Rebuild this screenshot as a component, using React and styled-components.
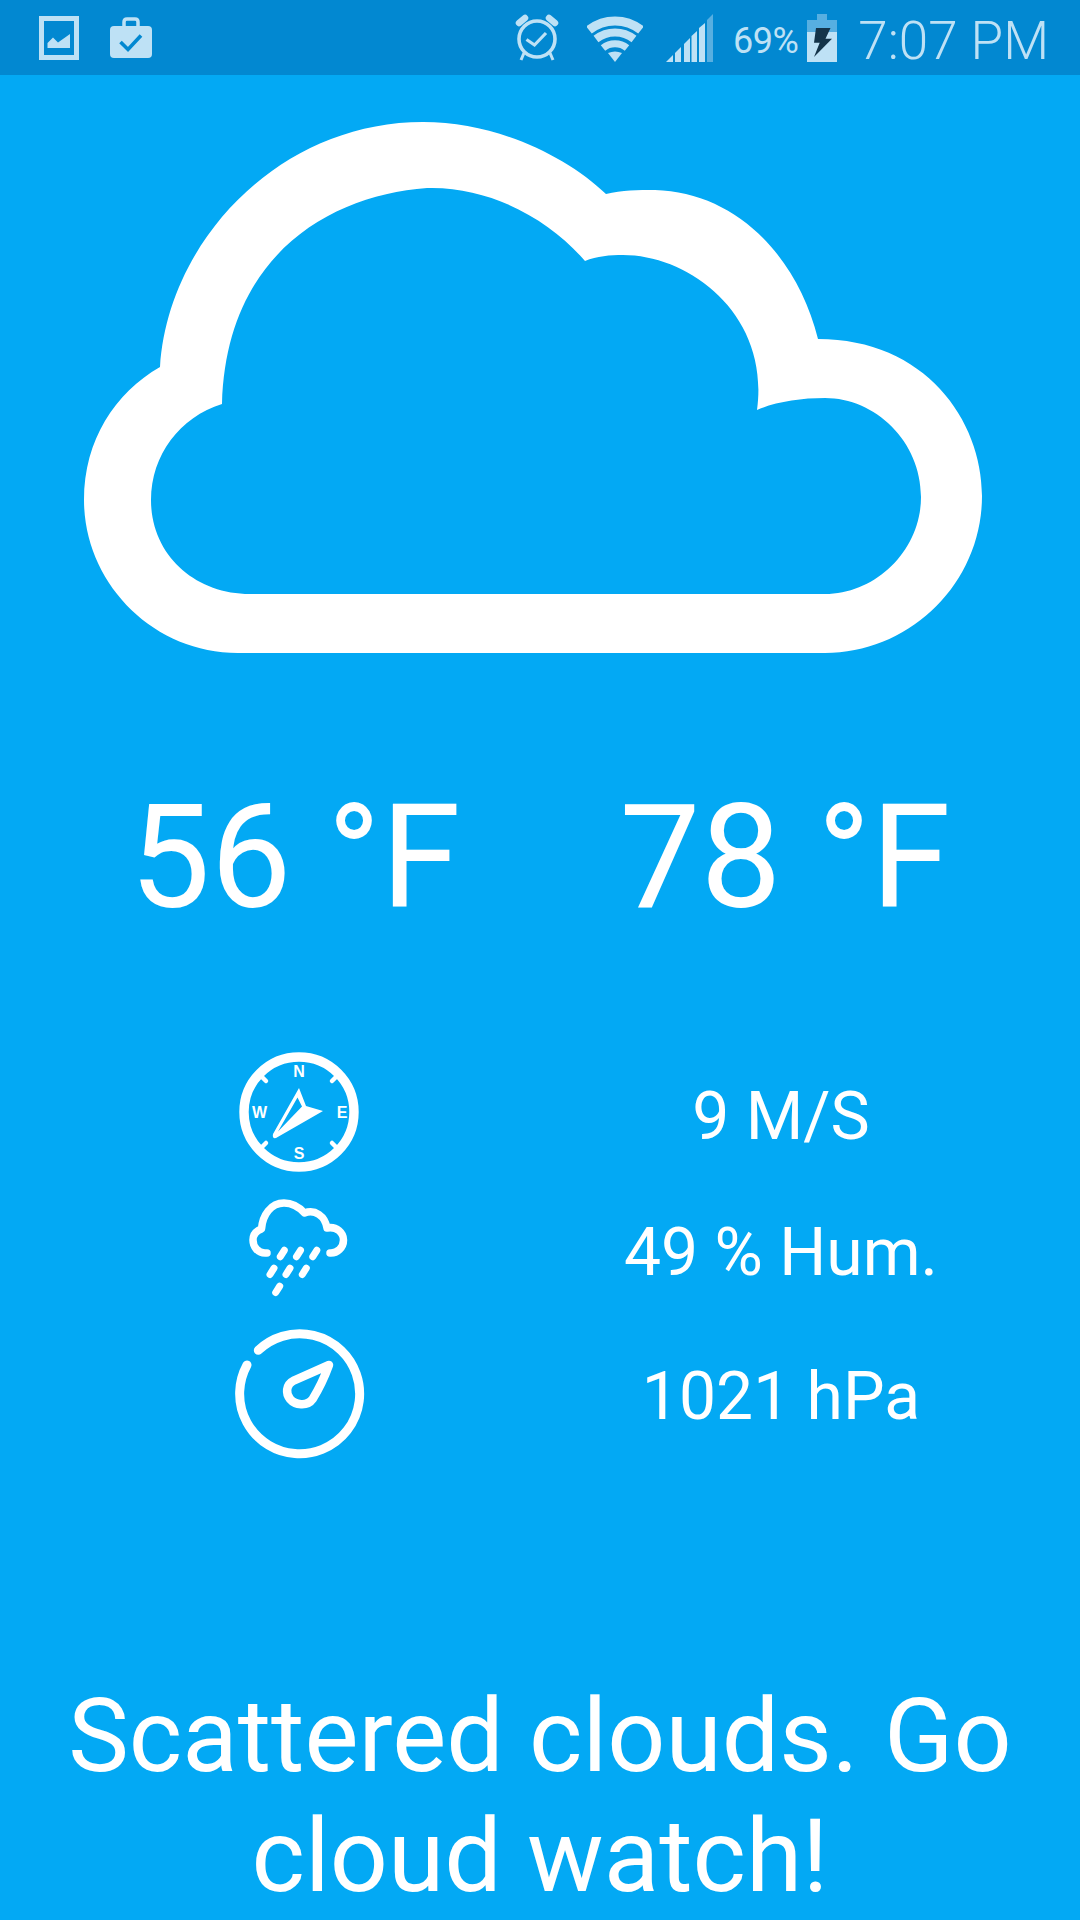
import React from 'react';
import styled, { createGlobalStyle } from 'styled-components';

const GlobalStyle = createGlobalStyle`
  html, body {
    margin: 0;
    padding: 0;
    background: #03a9f4;
  }
`;

const Page = styled.div`
  display: flex;
  flex-direction: column;
  width: 1080px;
  height: 1920px;
  overflow: hidden;
  background: #03a9f4;
  color: #fff;
  font-family: Roboto, sans-serif;
`;

const StatusBar = styled.div`
  display: flex;
  align-items: center;
  justify-content: space-between;
  height: 75px;
  flex-shrink: 0;
  padding: 0 31px 0 39px;
  box-sizing: border-box;
  background: #0288d1;
  color: #bee1f5;
`;

const StatusGroup = styled.div`
  display: flex;
  align-items: center;
`;

const StatusIcon = styled.svg`
  display: block;
  flex-shrink: 0;
  margin-right: ${(p) => p.$gap || 0}px;
`;

const BatteryText = styled.span`
  font-size: 36px;
  line-height: 40px;
  margin-right: 9px;
  padding-top: 6px;
  letter-spacing: -0.5px;
`;

const Clock = styled.span`
  font-size: 53px;
  line-height: 60px;
  margin-left: 21px;
  padding-top: 6px;
  font-weight: 300;
`;

const Hero = styled.div`
  padding: 47px 0 0 83px;
`;

const CloudIcon = styled.svg`
  display: block;
`;

const TempRow = styled.div`
  display: grid;
  grid-template-columns: 490px 490px;
  padding: 0 50px;
  margin-top: 119px;
`;

const Temp = styled.div`
  font-size: 144px;
  line-height: 170px;
  text-align: center;
`;

const Details = styled.div`
  display: flex;
  flex-direction: column;
  padding: 0 50px;
  margin-top: 100px;
`;

const DetailRow = styled.div`
  display: grid;
  grid-template-columns: 498px 466px;
  align-items: center;
  height: ${(p) => p.$height}px;
`;

const DetailIcon = styled.svg`
  display: block;
  justify-self: center;
`;

const DetailText = styled.div`
  font-size: 66px;
  line-height: 78px;
  padding-top: 10px;
  text-align: center;
`;

const Description = styled.div`
  margin-top: 207px;
  padding: 0 40px;
  font-size: 102px;
  line-height: 120px;
  text-align: center;
`;

const ImageGlyph = () => (
  <StatusIcon width="40" height="44" viewBox="39 16 40 44" $gap={31}>
    <path
      fillRule="evenodd"
      fill="currentColor"
      d="M39 16H79V60H39ZM44 21V55H74V21Z"
    />
    <path fill="currentColor" d="M47.5 48V43L53 37.5L58 42.5L70 34V48Z" />
  </StatusIcon>
);

const CaseGlyph = () => (
  <StatusIcon width="42" height="41" viewBox="110 16 42 41">
    <path
      fill="none"
      stroke="currentColor"
      strokeWidth="3.5"
      d="M124 26V21Q124 18 127 18H135Q138 18 138 21V26"
    />
    <rect x="110" y="25" width="42" height="32" rx="4" fill="currentColor" />
    <path
      fill="none"
      stroke="#0288d1"
      strokeWidth="3.6"
      d="M120.5 41L128 48.5L141 34.5"
    />
  </StatusIcon>
);

const AlarmGlyph = () => (
  <StatusIcon width="44" height="48" viewBox="514 14 44 48" $gap={28}>
    <circle cx="536" cy="39" r="18" fill="none" stroke="currentColor" strokeWidth="3.6" />
    <path
      fill="none"
      stroke="currentColor"
      strokeWidth="6.5"
      strokeLinecap="round"
      d="M518 23L524 18M554 23L548 18"
    />
    <path
      fill="none"
      stroke="currentColor"
      strokeWidth="3"
      d="M523 53L520 60M549 53L552 60"
    />
    <path
      fill="none"
      stroke="currentColor"
      strokeWidth="3.2"
      d="M525.5 39.5L533.5 45L545 33"
    />
  </StatusIcon>
);

const WifiGlyph = () => (
  <StatusIcon width="56" height="48" viewBox="586 13 56 48" $gap={23}>
    <g fill="none" stroke="currentColor">
      <path strokeWidth="9" d="M588 29A42 42 0 0 1 640 29" />
      <path strokeWidth="8" d="M595 38A31 31 0 0 1 633 38" />
      <path strokeWidth="7" d="M602 47A19 19 0 0 1 626 47" />
    </g>
    <path fill="currentColor" d="M607 52Q614 49 621 52L614 61Z" />
  </StatusIcon>
);

const SignalGlyph = () => (
  <StatusIcon width="48" height="48" viewBox="665 13 48 48" $gap={19}>
    <g fill="currentColor">
      <path d="M665 61L672 54V61Z" />
      <path d="M674 61V52L680 46V61Z" />
      <path d="M683 61V43L689 37V61Z" />
      <path d="M690.5 61V35L696 30V61Z" />
      <path d="M698 61V27L704 22V61Z" />
      <path d="M706 61V19L712 13V61Z" opacity="0.45" />
    </g>
  </StatusIcon>
);

const BatteryGlyph = () => (
  <StatusIcon width="30" height="48" viewBox="806 12 30 48">
    <path d="M816 12H826V18H836V30H806V18H816Z" fill="currentColor" opacity="0.45" />
    <rect x="806" y="30" width="30" height="30" fill="currentColor" />
    <path
      fill="#14344a"
      d="M815 26H829.5L824.5 36.7H831L813 55L818.7 40.7H813Z"
    />
  </StatusIcon>
);

const Cloud = () => (
  <CloudIcon width="900" height="532" viewBox="83 122 900 532">
    <path
      fill="#fff"
      fillRule="evenodd"
      d="M160 367C168 240 280 122 423 122C495 122 565 155 606 194C622 190 638 190 655 190C735 192 797 255 818 339C925 339 982 420 982 496C982 583 910 653 825 653H238C152 653 84 582 84 500C84 440 115 393 160 367Z
         M222 404C226 255 330 195 427 188C490 186 550 220 585 261C597 256 610 255 623 255C690 255 770 315 757 410C775 402 800 398 825 398C875 398 921 441 921 497C921 550 876 594 825 594H250C195 594 151 555 151 500C151 455 180 417 222 404Z"
    />
  </CloudIcon>
);

const CompassLetter = styled.text`
  font-family: "Liberation Sans", sans-serif;
  font-size: 16px;
  font-weight: 700;
  fill: #fff;
  text-anchor: middle;
  dominant-baseline: central;
`;

const Compass = () => (
  <DetailIcon width="120" height="120" viewBox="0 0 120 120">
    <circle cx="60" cy="60" r="55" fill="none" stroke="#fff" strokeWidth="9.4" />
    <path
      fill="none"
      stroke="#fff"
      strokeWidth="4.5"
      strokeLinecap="round"
      d="M23 25L27 29M97 25L93 29M23 95L27 91M97 95L93 91"
    />
    <path
      fill="#fff"
      fillRule="evenodd"
      d="M60 36L67 54L84 59L37 86Q33 87 34 82ZM58.5 45.5L39 79.5L63 54.5Z"
    />
    <CompassLetter x="60" y="19">N</CompassLetter>
    <CompassLetter x="20.5" y="60">W</CompassLetter>
    <CompassLetter x="103" y="60">E</CompassLetter>
    <CompassLetter x="60" y="101">S</CompassLetter>
  </DetailIcon>
);

const Rain = () => (
  <DetailIcon width="100" height="100" viewBox="30 16 100 100">
    <path
      fill="none"
      stroke="#fff"
      strokeWidth="7.5"
      strokeLinecap="round"
      strokeLinejoin="round"
      d="M48 71H46C39 71 34 65 34 58C34 53 37 49 42.5 47C43.5 33 52 21 65 21C73 21 80 25 85.5 31C96 27 106 34 108 46C118 44 124.5 51 124.5 58C124.5 66 118 71 112 71H111"
    />
    <path
      fill="none"
      stroke="#fff"
      strokeWidth="7"
      strokeLinecap="round"
      d="M65.3 68.3L61.3 74.7M81.5 68.3L77.5 74.7M97.8 68.3L93.8 74.7M55 86.1L51 92.5M71 86.1L67 92.5M87.3 86.1L83.3 92.5M60.7 104.1L56.7 110.5"
    />
  </DetailIcon>
);

const Gauge = () => (
  <DetailIcon width="140" height="140" viewBox="-72 -70 140 140">
    <path
      fill="none"
      stroke="#fff"
      strokeWidth="9"
      strokeLinecap="round"
      d="M-42.7 -41.7A60 60 0 1 1 -54 -27"
    />
    <path
      fill="none"
      stroke="#fff"
      strokeWidth="8.5"
      strokeLinejoin="round"
      d="M28 -27L-6.7 -11.7C-16 -7 -15 2 -11 7C-6 13 6 15 11.7 7C16 0 24 -16 28 -27Z"
    />
  </DetailIcon>
);

const App = () => {
  return (
    <React.Fragment>
      <GlobalStyle />
      <Page>
        <StatusBar>
          <StatusGroup>
            <ImageGlyph />
            <CaseGlyph />
          </StatusGroup>
          <StatusGroup>
            <AlarmGlyph />
            <WifiGlyph />
            <SignalGlyph />
            <BatteryText>69%</BatteryText>
            <BatteryGlyph />
            <Clock>7:07 PM</Clock>
          </StatusGroup>
        </StatusBar>
        <Hero>
          <Cloud />
        </Hero>
        <TempRow>
          <Temp>56 °F</Temp>
          <Temp>78 °F</Temp>
        </TempRow>
        <Details>
          <DetailRow $height={137}>
            <Compass />
            <DetailText>9 M/S</DetailText>
          </DetailRow>
          <DetailRow $height={135}>
            <Rain />
            <DetailText>49 % Hum.</DetailText>
          </DetailRow>
          <DetailRow $height={154}>
            <Gauge />
            <DetailText>1021 hPa</DetailText>
          </DetailRow>
        </Details>
        <Description>Scattered clouds. Go cloud watch!</Description>
      </Page>
    </React.Fragment>
  );
};

export default App;
